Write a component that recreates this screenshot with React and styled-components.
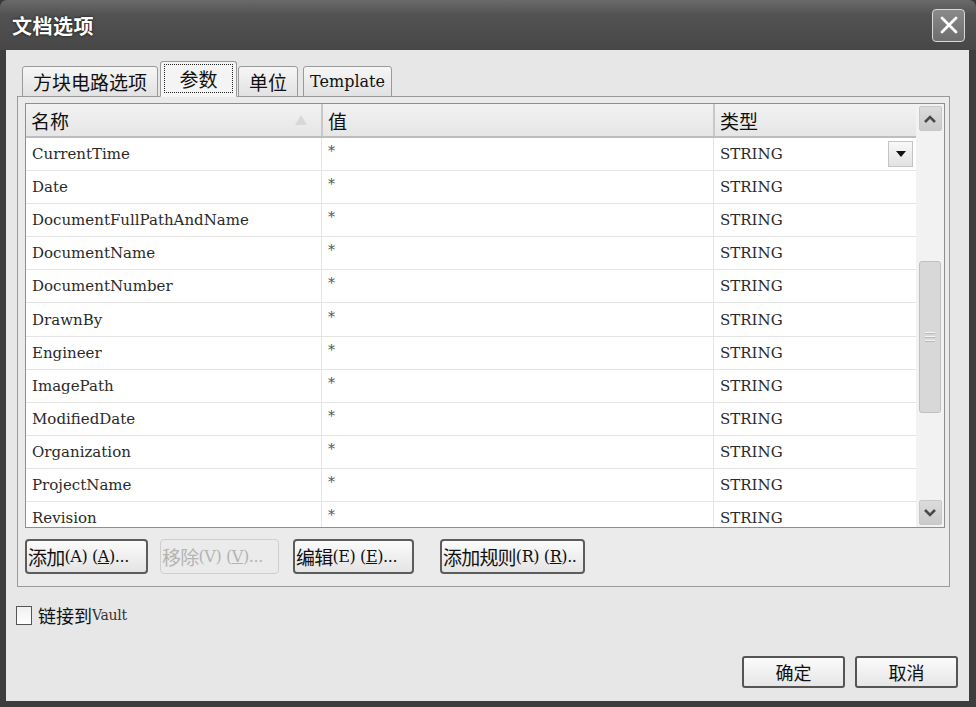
import React from 'react';
import styled, { createGlobalStyle } from 'styled-components';

const GlobalStyle = createGlobalStyle`
  html, body {
    margin: 0;
    padding: 0;
    background: #3a3a3a;
  }
  #root {
    width: 976px;
    height: 707px;
  }
`;

const CJK = `"Noto Sans CJK SC", "Noto Sans", sans-serif`;
const LATIN = `"DejaVu Serif", "Liberation Serif", "Noto Sans CJK SC", serif`;

const Window = styled.div`
  width: 976px;
  height: 707px;
  box-sizing: border-box;
  display: flex;
  flex-direction: column;
  background: #3d3d3d;
  border-radius: 7px 7px 0 0;
  padding: 0 7px 6px 6px;
  overflow: hidden;
`;

const TitleBar = styled.div`
  height: 50px;
  flex: none;
  display: flex;
  align-items: center;
  justify-content: space-between;
  margin: 0 -7px 0 -6px;
  padding: 0 11px 0 12px;
  background: linear-gradient(#6a6a6a 0%, #525252 30%, #474747 100%);
`;

const Title = styled.h1`
  margin: 0;
  font-family: ${CJK};
  font-size: 20px;
  font-weight: 700;
  color: #ffffff;
  letter-spacing: 0.5px;
  text-shadow: 0 0 3px rgba(0, 0, 0, 0.8);
`;

const CloseButton = styled.div`
  width: 33px;
  height: 33px;
  box-sizing: border-box;
  border: 1px solid #d8d8d8;
  border-radius: 4px;
  background: linear-gradient(#8a8a8a, #6e6e6e);
  display: flex;
  align-items: center;
  justify-content: center;
`;

const Client = styled.div`
  flex: 1;
  background: #e7e7e7;
  display: flex;
  flex-direction: column;
  padding: 12px 0 0 11px;
`;

const TabStrip = styled.div`
  display: flex;
  align-items: flex-end;
  height: 35px;
  padding-left: 5px;
  margin-bottom: -1px;
  position: relative;
  z-index: 1;
`;

const Tab = styled.div`
  box-sizing: border-box;
  height: ${(p) => (p.$active ? '36px' : '31px')};
  margin-left: ${(p) => p.$gap || 0}px;
  padding: ${(p) => (p.$active ? '2px 3px 3px' : '0 6px')};
  width: ${(p) => p.$w}px;
  border: 1px solid #9a9a9a;
  border-bottom: ${(p) => (p.$active ? '1px solid #f4f4f4' : '1px solid #9a9a9a')};
  border-radius: 3px 3px 0 0;
  background: ${(p) => (p.$active ? '#f4f4f4' : 'linear-gradient(#f6f6f6, #e2e2e2)')};
  display: flex;
  align-items: center;
  justify-content: center;
  font-family: ${(p) => (p.$latin ? LATIN : CJK)};
  font-size: ${(p) => (p.$latin ? '16px' : '19px')};
  color: #111;
`;

const FocusLabel = styled.span`
  flex: 1;
  align-self: stretch;
  display: flex;
  align-items: center;
  justify-content: center;
  border: 1px dotted #222;
`;

const Panel = styled.div`
  width: 933px;
  height: 491px;
  box-sizing: border-box;
  border: 1px solid #9a9a9a;
  background: #ebebeb;
  padding: 6px 4px 0 7px;
  display: flex;
  flex-direction: column;
`;

const Grid = styled.div`
  width: 920px;
  height: 425px;
  box-sizing: border-box;
  border: 1px solid #8e8e8e;
  background: #ffffff;
  display: flex;
  overflow: hidden;
`;

const Table = styled.div`
  flex: 1;
  display: flex;
  flex-direction: column;
  overflow: hidden;
`;

const HeaderRow = styled.div`
  display: grid;
  grid-template-columns: 295px 392px 1fr;
  height: 32px;
  flex: none;
  background: linear-gradient(#f2f2f2, #e6e6e6);
  border-bottom: 2px solid #bdbdbd;
`;

const HeaderCell = styled.div`
  display: flex;
  align-items: center;
  justify-content: space-between;
  padding: 0 14px 0 5px;
  font-family: ${CJK};
  font-size: 19px;
  color: #111;
  border-left: ${(p) => (p.$first ? 'none' : '2px solid #c8c8c8')};
`;

const SortArrow = styled.span`
  width: 0;
  height: 0;
  border-left: 6px solid transparent;
  border-right: 6px solid transparent;
  border-bottom: 10px solid #d8d8d8;
`;

const Row = styled.div`
  display: grid;
  grid-template-columns: 295px 392px 1fr;
  height: 33.1px;
  flex: none;
  box-sizing: border-box;
  border-bottom: 1px solid #e4e4e4;
`;

const Cell = styled.div`
  display: flex;
  align-items: center;
  justify-content: space-between;
  padding: 0 3px 0 6px;
  font-family: ${LATIN};
  font-size: 15px;
  line-height: 18px;
  color: #2a2a2a;
  border-left: ${(p) => (p.$first ? 'none' : '1px solid #e4e4e4')};
`;

const Star = styled.span`
  font-size: 14px;
  color: #555;
  margin-top: -6px;
`;

const DropButton = styled.div`
  width: 25px;
  height: 26px;
  box-sizing: border-box;
  border: 1px solid #c4c4c4;
  background: linear-gradient(#f8f8f8, #e2e2e2);
  display: flex;
  align-items: center;
  justify-content: center;
`;

const Scroll = styled.div`
  width: 28px;
  flex: none;
  background: #f2f2f2;
  display: flex;
  flex-direction: column;
  align-items: center;
  padding: 2px 0;
  box-sizing: border-box;
`;

const ScrollBtn = styled.div`
  width: 23px;
  height: 25px;
  flex: none;
  box-sizing: border-box;
  border: 1px solid #c8c8c8;
  border-radius: 2px;
  background: linear-gradient(#dcdcdc, #cacaca);
  display: flex;
  align-items: center;
  justify-content: center;
`;

const Track = styled.div`
  flex: 1;
  width: 100%;
  display: flex;
  flex-direction: column;
  align-items: center;
  padding-top: 130px;
`;

const Thumb = styled.div`
  width: 22px;
  height: 152px;
  box-sizing: border-box;
  border: 1px solid #c0c0c0;
  border-radius: 3px;
  background: #d8d8d8;
  display: flex;
  flex-direction: column;
  align-items: center;
  justify-content: center;
  gap: 2px;
`;

const Grip = styled.span`
  width: 10px;
  height: 1px;
  background: #f4f4f4;
  border-bottom: 1px solid #b8b8b8;
`;

const ButtonRow = styled.div`
  display: flex;
  align-items: center;
  margin-top: 11px;
`;

const ActionButton = styled.div`
  height: 35px;
  width: ${(p) => p.$w}px;
  margin-left: ${(p) => p.$gap || 0}px;
  box-sizing: border-box;
  border: ${(p) => (p.$disabled ? '1px solid #cfcfcf' : '2px solid #5c5c5c')};
  border-radius: 4px;
  background: ${(p) => (p.$disabled ? '#ebebeb' : 'linear-gradient(#fbfbfb, #e4e4e4)')};
  color: ${(p) => (p.$disabled ? '#b4b4b4' : '#111')};
  display: flex;
  align-items: center;
  padding-left: 1px;
  white-space: nowrap;
  overflow: hidden;
  font-family: ${CJK};
  font-size: 19px;
  letter-spacing: -0.8px;
`;

const Mnemonic = styled.span`
  font-family: ${LATIN};
  font-size: 16px;
  letter-spacing: -0.4px;
  u {
    text-decoration-thickness: 1px;
  }
`;

const CheckRow = styled.label`
  display: flex;
  align-items: center;
  gap: 6px;
  margin-top: 15px;
  margin-left: -1px;
  font-family: ${CJK};
  font-size: 18px;
  color: #111;
`;

const CheckBox = styled.span`
  width: 16px;
  height: 19px;
  box-sizing: border-box;
  border: 1px solid #555;
  background: linear-gradient(#f0f0f0, #ffffff);
`;

const VaultText = styled.span`
  font-family: ${LATIN};
  font-size: 14px;
  letter-spacing: -0.3px;
  color: #333;
  margin-left: -6px;
`;

const Footer = styled.div`
  display: flex;
  justify-content: flex-end;
  gap: 10px;
  margin-top: auto;
  margin-bottom: 13px;
  padding-right: 11px;
`;

const DialogButton = styled.div`
  width: 103px;
  height: 32px;
  box-sizing: border-box;
  border: 2px solid #555;
  border-radius: 3px;
  background: linear-gradient(#fbfbfb, #e6e6e6);
  display: flex;
  align-items: center;
  justify-content: center;
  font-family: ${CJK};
  font-size: 18px;
  color: #111;
`;

const rows = [
  'CurrentTime',
  'Date',
  'DocumentFullPathAndName',
  'DocumentName',
  'DocumentNumber',
  'DrawnBy',
  'Engineer',
  'ImagePath',
  'ModifiedDate',
  'Organization',
  'ProjectName',
  'Revision',
];

const Chevron = ({ up }) => (
  <svg width="14" height="10" viewBox="0 0 14 10">
    <path
      d={up ? 'M2 8 L7 3 L12 8' : 'M2 2 L7 7 L12 2'}
      fill="none"
      stroke="#4a4a4a"
      strokeWidth="2.6"
    />
  </svg>
);

const App = () => (
  <>
    <GlobalStyle />
    <Window>
      <TitleBar>
        <Title>文档选项</Title>
        <CloseButton>
          <svg width="20" height="20" viewBox="0 0 20 20">
            <path d="M3 3 L17 17 M17 3 L3 17" stroke="#ffffff" strokeWidth="2.8" strokeLinecap="round" />
          </svg>
        </CloseButton>
      </TitleBar>
      <Client>
        <TabStrip>
          <Tab $w={136}>方块电路选项</Tab>
          <Tab $w={77} $gap={2} $active>
            <FocusLabel>参数</FocusLabel>
          </Tab>
          <Tab $w={60} $gap={1}>单位</Tab>
          <Tab $w={89} $gap={5} $latin>Template</Tab>
        </TabStrip>
        <Panel>
          <Grid>
            <Table>
              <HeaderRow>
                <HeaderCell $first>
                  名称
                  <SortArrow />
                </HeaderCell>
                <HeaderCell>值</HeaderCell>
                <HeaderCell>类型</HeaderCell>
              </HeaderRow>
              {rows.map((name, i) => (
                <Row key={name}>
                  <Cell $first>{name}</Cell>
                  <Cell>
                    <Star>*</Star>
                  </Cell>
                  <Cell>
                    STRING
                    {i === 0 && (
                      <DropButton>
                        <svg width="12" height="8" viewBox="0 0 12 8">
                          <path d="M1 1 L11 1 L6 7 Z" fill="#111" />
                        </svg>
                      </DropButton>
                    )}
                  </Cell>
                </Row>
              ))}
            </Table>
            <Scroll>
              <ScrollBtn>
                <Chevron up />
              </ScrollBtn>
              <Track>
                <Thumb>
                  <Grip />
                  <Grip />
                  <Grip />
                </Thumb>
              </Track>
              <ScrollBtn>
                <Chevron />
              </ScrollBtn>
            </Scroll>
          </Grid>
          <ButtonRow>
            <ActionButton $w={123}>
              添加<Mnemonic>(A) (<u>A</u>)...</Mnemonic>
            </ActionButton>
            <ActionButton $w={119} $gap={12} $disabled>
              移除<Mnemonic>(V) (<u>V</u>)...</Mnemonic>
            </ActionButton>
            <ActionButton $w={121} $gap={14}>
              编辑<Mnemonic>(E) (<u>E</u>)...</Mnemonic>
            </ActionButton>
            <ActionButton $w={145} $gap={26}>
              添加规则<Mnemonic>(R) (<u>R</u>)..</Mnemonic>
            </ActionButton>
          </ButtonRow>
        </Panel>
        <CheckRow>
          <CheckBox />
          链接到<VaultText>Vault</VaultText>
        </CheckRow>
        <Footer>
          <DialogButton>确定</DialogButton>
          <DialogButton>取消</DialogButton>
        </Footer>
      </Client>
    </Window>
  </>
);

export default App;
